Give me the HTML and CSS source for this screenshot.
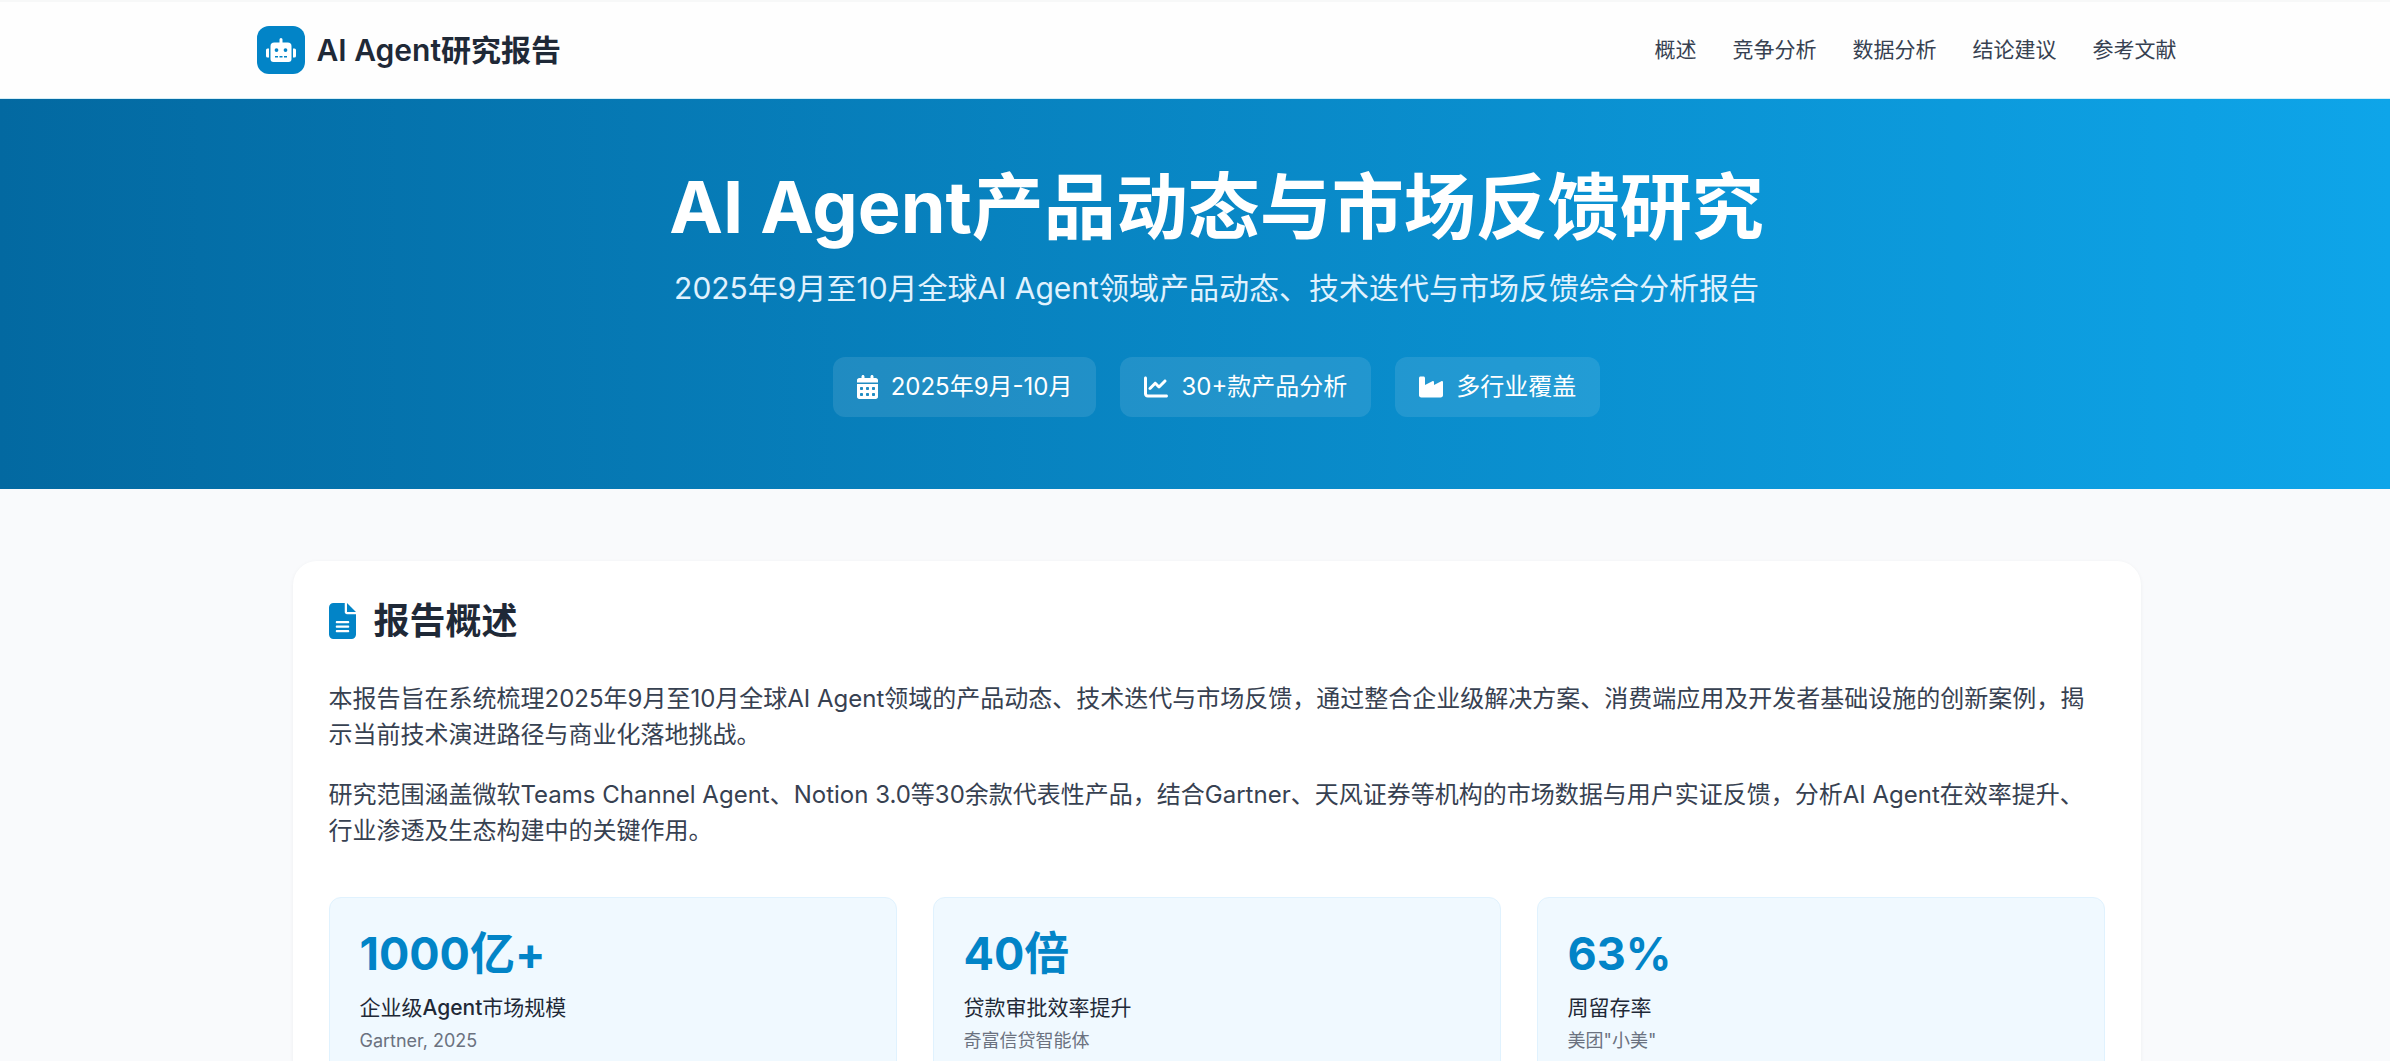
FILE: index.html
```html
<!DOCTYPE html>
<html lang="zh-CN">
<head>
    <meta charset="UTF-8">
    <meta name="viewport" content="width=device-width, initial-scale=1.0">
    <title>AI Agent研究报告</title>
    <link rel="stylesheet" href="styles.css">
</head>
<body>
    <!-- Header -->
    <header class="header">
        <div class="container header-inner">
            <div class="logo">
                <span class="logo-icon">
                    <svg viewBox="0 0 640 512" width="30" height="24" aria-hidden="true"><path fill="currentColor" d="M32 224H64V416H32A32 32 0 0 1 0 384V256A32 32 0 0 1 32 224zm512-48V448a64 64 0 0 1-64 64H160a64 64 0 0 1-64-64V176a80 80 0 0 1 80-80H288V32a32 32 0 0 1 64 0V96H464a80 80 0 0 1 80 80zM264 256a40 40 0 1 0-40 40 40 40 0 0 0 40-40zm-8 128H192v32h64zm96 0H288v32h64zm104-128a40 40 0 1 0-40 40 40 40 0 0 0 40-40zm-8 128H384v32h64zM640 256V384a32 32 0 0 1-32 32H576V224h32a32 32 0 0 1 32 32z"/></svg>
                </span>
                <span class="logo-text">AI Agent研究报告</span>
            </div>
            <nav class="nav">
                <a href="#overview">概述</a>
                <a href="#competition">竞争分析</a>
                <a href="#data">数据分析</a>
                <a href="#conclusion">结论建议</a>
                <a href="#references">参考文献</a>
            </nav>
        </div>
    </header>

    <!-- Hero -->
    <section class="hero">
        <div class="container">
            <h1>AI Agent产品动态与市场反馈研究</h1>
            <p class="subtitle">2025年9月至10月全球AI Agent领域产品动态、技术迭代与市场反馈综合分析报告</p>
            <div class="tags">
                <div class="tag">
                    <svg viewBox="0 0 448 512" width="21" height="24" aria-hidden="true"><path fill="currentColor" fill-rule="evenodd" d="M128 0c17.700 0 32 14.300 32 32V64H288V32c0-17.700 14.300-32 32-32s32 14.300 32 32V64h48c26.500 0 48 21.500 48 48v48H0V112C0 85.500 21.500 64 48 64H96V32c0-17.700 14.300-32 32-32zM0 192H448V464c0 26.500-21.500 48-48 48H48c-26.500 0-48-21.500-48-48V192zm64 80v32c0 8.800 7.200 16 16 16h32c8.800 0 16-7.200 16-16V272c0-8.800-7.200-16-16-16H80c-8.800 0-16 7.200-16 16zm128 0v32c0 8.800 7.200 16 16 16h32c8.800 0 16-7.200 16-16V272c0-8.800-7.200-16-16-16H208c-8.800 0-16 7.200-16 16zm144-16c-8.800 0-16 7.200-16 16v32c0 8.800 7.200 16 16 16h32c8.800 0 16-7.200 16-16V272c0-8.800-7.200-16-16-16H336zM64 400v32c0 8.800 7.200 16 16 16h32c8.800 0 16-7.200 16-16V400c0-8.800-7.200-16-16-16H80c-8.800 0-16 7.200-16 16zm144-16c-8.800 0-16 7.200-16 16v32c0 8.800 7.200 16 16 16h32c8.800 0 16-7.200 16-16V400c0-8.800-7.200-16-16-16H208zm112 16v32c0 8.800 7.200 16 16 16h32c8.800 0 16-7.200 16-16V400c0-8.800-7.200-16-16-16H336c-8.800 0-16 7.200-16 16z"/></svg>
                    <span>2025年9月-10月</span>
                </div>
                <div class="tag">
                    <svg viewBox="0 0 512 512" width="24" height="24" aria-hidden="true"><path fill="currentColor" d="M64 64c0-17.700-14.300-32-32-32S0 46.300 0 64V400c0 44.200 35.800 80 80 80H480c17.700 0 32-14.300 32-32s-14.300-32-32-32H80c-8.800 0-16-7.200-16-16V64zm406.600 86.600c12.500-12.500 12.500-32.800 0-45.300s-32.800-12.500-45.300 0L320 210.700l-57.400-57.400c-12.500-12.500-32.800-12.500-45.300 0l-112 112c-12.500 12.500-12.500 32.800 0 45.300s32.800 12.500 45.300 0L240 221.300l57.400 57.400c12.500 12.500 32.800 12.500 45.300 0l128-128z"/></svg>
                    <span>30+款产品分析</span>
                </div>
                <div class="tag">
                    <svg viewBox="0 0 512 512" width="24" height="24" aria-hidden="true"><path fill="currentColor" d="M32 32C14.300 32 0 46.300 0 64V432c0 26.500 21.500 48 48 48H464c26.500 0 48-21.500 48-48V152.200c0-18.200-19.400-29.700-35.400-21.100L320 215.400V152.200c0-18.200-19.400-29.700-35.400-21.100L128 215.400V64c0-17.700-14.300-32-32-32H32z"/></svg>
                    <span>多行业覆盖</span>
                </div>
            </div>
        </div>
    </section>

    <!-- Main content -->
    <main class="main">
        <div class="container content">
            <section class="card" id="overview">
                <h2>
                    <svg viewBox="0 0 384 512" width="27" height="36" aria-hidden="true"><path fill="currentColor" d="M64 0C28.700 0 0 28.700 0 64V448c0 35.300 28.700 64 64 64H320c35.300 0 64-28.700 64-64V160H256c-17.700 0-32-14.300-32-32V0H64zM256 0V128H384L256 0zM112 256H272c8.800 0 16 7.200 16 16s-7.200 16-16 16H112c-8.800 0-16-7.200-16-16s7.200-16 16-16zm0 64H272c8.800 0 16 7.200 16 16s-7.200 16-16 16H112c-8.800 0-16-7.200-16-16s7.200-16 16-16zm0 64H272c8.800 0 16 7.200 16 16s-7.200 16-16 16H112c-8.800 0-16-7.200-16-16s7.200-16 16-16z"/></svg>
                    报告概述
                </h2>
                <p>本报告旨在系统梳理2025年9月至10月全球AI Agent领域的产品动态、技术迭代与市场反馈，通过整合企业级解决方案、消费端应用及开发者基础设施的创新案例，揭示当前技术演进路径与商业化落地挑战。</p>
                <p>研究范围涵盖微软Teams Channel Agent、Notion 3.0等30余款代表性产品，结合Gartner、天风证券等机构的市场数据与用户实证反馈，分析AI Agent在效率提升、行业渗透及生态构建中的关键作用。</p>

                <div class="stats">
                    <div class="stat">
                        <div class="stat-value">1000亿+</div>
                        <div class="stat-label">企业级<span class="latin">Agent</span>市场规模</div>
                        <div class="stat-source">Gartner, 2025</div>
                    </div>
                    <div class="stat">
                        <div class="stat-value">40倍</div>
                        <div class="stat-label">贷款审批效率提升</div>
                        <div class="stat-source">奇富信贷智能体</div>
                    </div>
                    <div class="stat">
                        <div class="stat-value">63%</div>
                        <div class="stat-label">周留存率</div>
                        <div class="stat-source">美团"小美"</div>
                    </div>
                </div>
            </section>
        </div>
    </main>
</body>
</html>
```

FILE: styles.css
```css
* {
    box-sizing: border-box;
}

body {
    margin: 0;
    font-family: Inter, "Noto Sans CJK SC", sans-serif;
    font-size: 24px;
    line-height: 36px;
    color: #374151;
    background-color: #f9fafc;
}

h1, h2, p {
    margin: 0;
}

svg {
    display: block;
    flex-shrink: 0;
}

.container {
    max-width: 1920px;
    margin: 0 auto;
}

/* Same side padding everywhere keeps the sections lined up */
.header,
.hero,
.main {
    padding-left: 67px;
    padding-right: 24px;
}

.header {
    background-color: #fefefe;
    border-top: 2px solid #f7f8f8;
    border-bottom: 1px solid #d5eef7;
}

.header-inner {
    display: flex;
    align-items: center;
    justify-content: space-between;
    padding: 24px 0;
}

.logo {
    display: flex;
    align-items: center;
    gap: 12px;
}

.logo-icon {
    display: flex;
    align-items: center;
    justify-content: center;
    width: 48px;
    height: 48px;
    border-radius: 12px;
    background-color: #0284c7;
    color: white;
}

.logo-text {
    font-size: 30px;
    font-weight: 600;
    color: #1f2937;
}

.nav {
    display: flex;
    gap: 36px;
}

.nav a {
    font-size: 21px;
    color: #374151;
    text-decoration: none;
}

.nav a:hover {
    color: #0284c7;
}

/* Hero */
.hero {
    padding-top: 72px;
    padding-bottom: 72px;
    background: linear-gradient(90deg, #0369a1, #0ea5e9);
    color: white;
    text-align: center;
}

.hero h1 {
    margin-bottom: 24px;
    font-size: 72px;
    line-height: 72px;
    font-weight: 700;
}

.subtitle {
    margin-bottom: 48px;
    font-size: 30px;
    line-height: 42px;
    color: #e0f2fe;
}

.tags {
    display: flex;
    flex-wrap: wrap;
    justify-content: center;
    gap: 24px;
}

.tag {
    display: flex;
    align-items: center;
    gap: 13px;
    padding: 12px 24px;
    border-radius: 12px;
    background-color: rgba(255, 255, 255, 0.1);
}

/* Overview card */
.main {
    padding-top: 72px;
    padding-bottom: 72px;
}

.content {
    padding: 0 36px;
}

.card {
    padding: 36px;
    border-radius: 24px;
    background-color: white;
    box-shadow: 0 1px 4px rgba(0, 0, 0, 0.05);
}

.card h2 {
    display: flex;
    align-items: center;
    gap: 18px;
    margin-bottom: 36px;
    font-size: 36px;
    line-height: 48px;
    font-weight: 700;
    color: #1f2937;
}

.card h2 svg {
    color: #0284c7;
}

.card p {
    margin-bottom: 24px;
}

.stats {
    display: grid;
    grid-template-columns: repeat(3, 1fr);
    gap: 36px;
    margin-top: 48px;
}

.stat {
    padding: 29px 30px;
    border: 1px solid #e0f2fe;
    border-radius: 12px;
    background-color: #f0f9ff;
}

.stat-value {
    margin-bottom: 12px;
    font-size: 45px;
    line-height: 54px;
    font-weight: 700;
    color: #0284c7;
}

.stat-label {
    margin-bottom: 6px;
    font-size: 21px;
    line-height: 30px;
    color: #1f2937;
}

.stat-label .latin {
    font-weight: 500;
}

.stat-source {
    font-size: 18px;
    line-height: 24px;
    color: #6b7280;
}
```
